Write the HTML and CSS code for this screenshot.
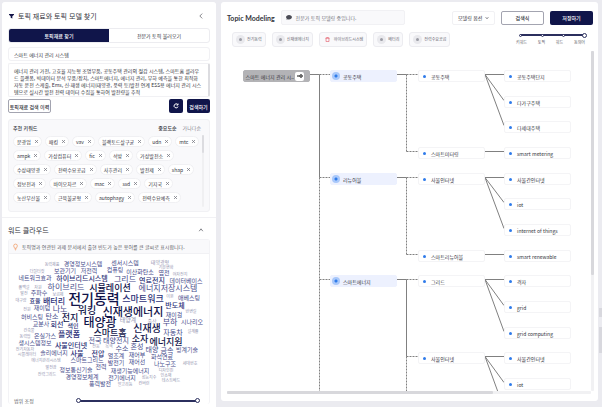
FILE: index.html
```html
<!DOCTYPE html>
<html lang="ko">
<head>
<meta charset="utf-8">
<meta name="viewport" content="width=device-width, initial-scale=1">
<title>Topic Modeling</title>
<link rel="stylesheet" href="styles.css">
</head>
<body>
<div class="app">
  <aside class="side">
    <section class="block finder">
      <header class="block-head">
        <svg class="funnel" viewBox="0 0 12 12"><path d="M0 1h12v2L8 6.500V12L4 10V6.500L0 3z"/></svg>
        <h2>토픽 재료와 토픽 모델 찾기</h2>
        <button class="icon-btn" aria-label="접기"><svg viewBox="0 0 10 10"><path d="M7 1L3 5l4 4"/></svg></button>
      </header>
      <div class="tabs">
        <button class="tab on">토픽재료 찾기</button>
        <button class="tab">전문가 토픽 불러오기</button>
      </div>
      <input class="field" type="text" aria-label="토픽명" value="스마트 에너지 관리 시스템">
      <div class="area">
        <textarea aria-label="토픽 설명" rows="4">에너지 관리 가전, 고효율 지능형 조명부품, 공동주택 관리의 절감 시스템, 스마트홈 클라우
드 플랫폼, 빅데이터 분석 부품/장치, 스마트에너지, 에너지 관리, 부하 예측을 통한 최적화
자동 운전 스케줄, Ems, 신·재생 에너지(태양광, 풍력 등)발전 연계 ESS용 에너지 관리 시스
템으로 실시간 발전 전력 데이터 수집을 통하여 발전량을 추적</textarea>
      </div>
      <div class="actions">
        <button class="btn outline history">토픽재료 검색 이력</button>
        <button class="btn dark refresh" aria-label="새로고침"><svg viewBox="0 0 12 12"><path d="M9.500 3.500A4 4 0 1 0 10 7M10 1v3H7"/></svg></button>
        <button class="btn dark search">검색하기</button>
      </div>
      <div class="keywords">
        <div class="kw-head">
          <h3>추천 키워드</h3>
          <button class="sort on">중요도순</button>
          <button class="sort">가나다순</button>
        </div>
        <div class="kw-body">
          <div class="chips" id="chips"></div>
          <div class="kw-scroll"><i></i></div>
        </div>
      </div>
    </section>
    <section class="block words">
      <header class="block-head">
        <h2>워드 클라우드</h2>
        <button class="icon-btn" aria-label="접기"><svg viewBox="0 0 10 10"><path d="M2 7l3-4 3 4"/></svg></button>
      </header>
      <div class="cloud-card">
        <p class="tip">
          <svg viewBox="0 0 12 16"><path d="M4 11C4 9 1.500 8 1.500 5.500a4.500 4.500 0 0 1 9 0C10.500 8 8 9 8 11zM4 13h4M5 15h2"/></svg>
          토픽명과 연관된 과제 문서에서 출현 빈도가 높은 용어를 큰 글씨로 표시합니다.
        </p>
        <div class="cloud" id="cloud"></div>
        <div class="range-row">
          <label for="scope-max">범위 조정</label>
          <div class="dual">
            <input type="range" id="scope-min" aria-label="최소 범위" min="0" max="100" value="0">
            <input type="range" id="scope-max" min="0" max="100" value="100">
          </div>
        </div>
      </div>
    </section>
  </aside>

  <main class="main">
    <header class="top">
      <h1>Topic Modeling</h1>
      <p class="status"><svg viewBox="0 0 14 12"><path d="M7 0c4 0 7 2.300 7 5.300s-3 5.200-7 5.200c-1 0-2-.1-3-.5L1 11.500 1.600 8.500C.6 7.600 0 6.500 0 5.300 0 2.300 3 0 7 0z"/></svg>전문가 토픽 모델링 중입니다.</p>
      <div class="pick">
        <select aria-label="모델링 옵션"><option>모델링 옵션</option></select>
        <svg viewBox="0 0 10 10"><path d="M2 3.500l3 3 3-3"/></svg>
      </div>
      <button class="btn outline wide">검색식</button>
      <button class="btn dark wide">저장하기</button>
    </header>
    <div class="sub">
      <div class="tags">
        <button class="tag"><i class="plus"></i>전기동력</button>
        <button class="tag"><i class="plus"></i>신재생에너지</button>
        <button class="tag"><svg class="trash" viewBox="0 0 12 12"><path d="M1 3h10M4 3V1h4v2M2.500 3v8h7V3"/></svg>하이브리드시스템</button>
        <button class="tag"><i class="plus"></i>배터리</button>
        <button class="tag"><i class="plus"></i>전력수요공급</button>
      </div>
      <div class="depth">
        <div class="depth-track">
          <i></i><i></i><i></i>
          <input type="range" aria-label="표시 단계" min="0" max="3" value="3">
        </div>
        <div class="depth-labels"><span>키워드</span><span>토픽</span><span>워드</span><span>동의어</span></div>
      </div>
    </div>
    <div class="stage">
      <div class="canvas" id="canvas"><svg class="wires" id="wires"></svg></div>
      <div class="vbar"><i></i></div>
      <div class="hbar"><i></i></div>
    </div>
  </main>
  <div class="rail"><i class="short"></i><i class="long"></i></div>
</div>
<script src="app.js"></script>
</body>
</html>
```
FILE: styles.css
```css
* { box-sizing: border-box; margin: 0; padding: 0; }
html, body { height: 100%; }
body {
  background: #ebebf0;
  color: #33343c;
  font: 400 5px/7px "Noto Sans CJK KR", "Noto Sans", sans-serif;
  overflow: hidden;
}
button, input, textarea, select {
  font: inherit;
  color: inherit;
  border: 0;
  background: none;
  outline: 0;
}
button { white-space: nowrap; }
svg { fill: none; stroke: currentColor; flex: none; }
h1, h2, h3 { font-weight: 500; }

.app {
  display: grid;
  grid-template-columns: 214px minmax(0, 1fr);
  gap: 5px;
  height: 100vh;
  padding: 2px 4px 0 2px;
}

/* Sidebar */
.side { display: flex; flex-direction: column; gap: 1px; min-height: 0; background: #f1f1f4; border-radius: 3px 3px 0 0; overflow: hidden; }
.block { background: #fff; padding: 0 6px; }
.finder { padding-bottom: 5px; }
.words { flex: 1; }
.block-head { display: flex; align-items: center; gap: 4px; height: 26px; padding-top: 2px; }
.block-head h2 { flex: 1; font-size: 7px; line-height: 10px; font-weight: 400; }
.words .block-head { height: 21px; }
.funnel { width: 5px; height: 6px; margin-left: 1px; fill: #14164a; stroke: none; }
.icon-btn { display: flex; padding: 0 6px 0 0; }
.icon-btn svg { width: 6px; height: 6px; stroke-width: 1; }

.tabs { display: flex; height: 15px; border: 1px solid #ececf0; border-radius: 3px; overflow: hidden; }
.tab { flex: 1; }
.tab.on { background: #10154a; color: #fff; font-weight: 500; }
.field { display: block; width: 100%; height: 14px; margin-top: 4px; padding: 0 5px; border: 1px solid #f1f1f4; border-radius: 3px; }
.area { display: flex; margin-top: 2px; border: 1px solid #f1f1f4; border-right: 2px solid #dcdce0; border-radius: 2px; }
.area textarea { flex: 1; min-width: 0; height: 32px; padding: 3px 0 0 5px; resize: none; overflow: hidden; white-space: pre; }

.btn { display: flex; align-items: center; justify-content: center; height: 14px; border-radius: 2px; font-weight: 500; }
.outline { border: 1px solid #a3a4b0; background: #fff; }
.dark { background: #10154a; color: #fff; }
.actions { display: flex; gap: 4px; margin-top: 2px; }
.history { width: 43px; margin-right: auto; }
.refresh { width: 14px; }
.refresh svg { width: 6px; height: 6px; stroke-width: 2; }
.search { width: 23px; }

.keywords { margin-top: 6px; padding: 4px 4px 5px; height: 93px; background: #f9f9fb; border: 1px solid #f1f1f4; border-radius: 3px; }
.kw-head { display: flex; gap: 6px; padding-right: 4px; }
.kw-head h3 { flex: 1; font-size: 5px; font-weight: 500; }
.sort { color: #85868f; line-height: 7px; }
.sort.on { color: #33343c; font-weight: 500; }
.kw-body { display: flex; margin-top: 4px; }
.chips { flex: 1; display: grid; align-content: start; gap: 3px; padding-top: 1px; }
.chip-row { display: flex; gap: 3px; }
.chip { display: flex; align-items: center; gap: 4px; height: 11px; padding: 0 3px; background: #fff; border: 1px solid #f0f0f3; border-radius: 6px; }
.chip svg { width: 3px; height: 3px; color: #777882; stroke-width: 1; }
.kw-scroll { width: 2px; height: 72px; background: #f0f0f2; border-radius: 1px; margin-right: 1px; }
.kw-scroll i { display: block; height: 18px; background: #dcdce0; border-radius: 1px; }

.cloud-card { border: 1px solid #f3f3f6; border-bottom: 0; border-radius: 3px; }
.tip { display: flex; align-items: center; gap: 4px; height: 14px; padding: 0 4px; background: #f9f9fb; border-bottom: 1px solid #f1f1f4; color: #5c5d66; white-space: nowrap; }
.tip svg { width: 5px; height: 8px; color: #f08b4c; stroke-width: 1.5; }
.cloud { position: relative; height: 143px; }
.cloud span { position: absolute; transform: translate(-50%, -50%); white-space: nowrap; line-height: 1; }
.t0 { color: #9495b0; }
.t1 { color: #484d8c; }
.t2 { color: #2d3278; font-weight: 500; }
.t3 { color: #11144a; font-weight: 500; }
.range-row { display: flex; align-items: center; justify-content: space-between; padding: 0 9px 0 5px; }
.range-row label { color: #5c5d66; }
.dual { display: grid; width: 124px; background: linear-gradient(#2b2f5e, #2b2f5e) center / 120px 2px no-repeat; }
.dual input { grid-area: 1 / 1; pointer-events: none; }
input[type="range"] { appearance: none; width: 100%; height: 6px; background: none; }
input[type="range"]::-webkit-slider-thumb { appearance: none; width: 5px; height: 5px; background: #fff; border: 1px solid #2b2f5e; border-radius: 50%; pointer-events: auto; }

/* Main panel */
.main { display: flex; flex-direction: column; min-width: 0; margin-bottom: 6px; padding: 8px 4px 7px 6px; background: #fff; border-radius: 3px; }
.top { display: flex; align-items: center; gap: 6px; padding-right: 1px; }
.top h1 { font: 700 7px/10px Lato, sans-serif; white-space: nowrap; }
.status { display: flex; align-items: center; gap: 4px; width: 124px; height: 15px; margin-right: auto; padding: 0 4px; background: #f9f9fb; border: 1px solid #f1f1f4; border-radius: 2px; color: #777882; }
.status svg { width: 6px; height: 5px; fill: #4a4b55; stroke: none; }
.pick { display: flex; align-items: center; width: 43px; height: 14px; padding: 0 5px; border: 1px solid #f1f1f4; border-radius: 2px; }
.pick select { flex: 1; min-width: 0; appearance: none; }
.pick svg { width: 4px; height: 4px; stroke-width: 2; }
.wide { width: 43px; }

.sub { display: flex; justify-content: space-between; margin-top: 7px; padding: 0 7px 0 5px; height: 19px; }
.tags { display: flex; gap: 6px; }
.tag { display: flex; align-items: center; gap: 2px; height: 15px; padding: 0 3px; background: #f9f9fb; border: 1px solid #ececf0; border-radius: 3px; color: #666771; font-size: 4px; }
.plus { display: grid; place-items: center; width: 9px; height: 9px; border-radius: 50%; background: #e9e9ed; }
.plus::before { content: ""; width: 3px; height: 3px; border-radius: 50%; background: #9c9da6; }
.trash { width: 5px; height: 5px; margin: 0 2px; color: #e25563; stroke-width: 1.5; }
.depth { width: 72px; }
.depth-track { display: grid; grid-template-columns: 22px 21px 25px; align-items: center; height: 6px; padding-left: 4px; background: linear-gradient(#2b2f5e, #2b2f5e) 5px center / 64px 2px no-repeat; }
.depth-track i { grid-area: 1 / 1; width: 3px; height: 3px; border: 1px solid #2b2f5e; background: #fff; border-radius: 50%; }
.depth-track i:nth-child(2) { grid-column: 2; }
.depth-track i:nth-child(3) { grid-column: 3; }
.depth-track input { grid-area: 1 / 1 / 2 / 4; }
.depth-labels { display: flex; justify-content: space-between; padding: 0 2px 0 1px; font-size: 4px; color: #5c5d66; margin-top: 1px; }

.stage { flex: 1; min-height: 0; display: grid; grid-template: minmax(0, 1fr) 3px / minmax(0, 1fr) 3px; }
.canvas { position: relative; overflow: hidden; }
.vbar, .hbar { background: #f1f1f3; border-radius: 1px; }
.vbar i, .hbar i { display: block; background: #d8d8dc; border-radius: 1px; }
.vbar i { height: 66%; }
.hbar i { width: 73%; height: 3px; }
.wires { position: absolute; width: 100%; height: 100%; stroke: #808080; stroke-width: 1; }
.wires .dots { stroke-dasharray: 2 1; }
.node { position: absolute; display: flex; align-items: center; gap: 5px; width: 67px; height: 12px; padding: 0 4px; background: #fff; border: 1px solid #f4f4f6; border-radius: 2px; white-space: nowrap; }
.node::before { content: ""; width: 3px; height: 3px; border-radius: 50%; background: #2f7bea; }
.node.topic { gap: 3px; padding: 0 1px; background: #edf1fe; border-color: #edf1fe; }
.node.topic::before { width: 8px; height: 8px; background: radial-gradient(circle, #2f7bea 0 1px, #a9c8fa 2px); }
.node.root { justify-content: flex-end; gap: 1px; padding: 0 5px; background: #b3b3b6; border-color: #b3b3b6; }
.node.root::before { display: none; }
.toggle { display: flex; flex: none; align-items: center; justify-content: center; width: 9px; height: 9px; background: #fff; border-radius: 2px; }
.toggle svg { width: 6px; height: 4px; stroke-width: 2; color: #111; }

.rail { position: absolute; right: 0; top: 308px; display: grid; gap: 10px; width: 3px; }
.rail i { background: #d8d8de; }
.short { height: 9px; }
.long { height: 26px; }
```
FILE: app.js
```js
const keywords = [
  ["문광업", "패킹", "vav", "블랙토드살구균", "udn", "mtc"],
  ["ampk", "가상컴퓨터", "fic", "석방", "가상발전소"],
  ["수상태양광", "전력수요공급", "사후관리", "발전제", "shap"],
  ["정보전과", "바이오차르", "mac", "ssd", "기지국"],
  ["농산부산물", "근육불균형", "autophagy", "전력수요예측"]
];
document.getElementById("chips").innerHTML = keywords.map(row => `<div class="chip-row">${row.map(k =>
  `<button class="chip">${k}<svg viewBox="0 0 4 4"><path d="M0 0l4 4M4 0L0 4"/></svg></button>`).join("")}</div>`).join("");

// text, centre x, centre y, size, tone
const cloudWords = [
  ["동력제품",52,264,4,0],["경영정보시스템",83,264,6,1],["센서시스템",125,263,6,1],["태양광형",160,261,5,0],["기운변화",166,267,4,0],
  ["더칠터컷",37,271,4,0],["보관기기",65,271,6,1],["저전력",89,271,6,1],["컴퓨팅",115,270,6,1],["이산화탄소",140,272,6,1],["엽전",164,273,6,1],["여자전지",180,274,4,0],
  ["네트워크효과",35,278,6,1],["하이브리드시스템",82,278,7,2],["그리드",125,279,8,1],["연료전지",152,280,7,2],["데이터베이스",186,281,6,1],
  ["폴백설",24,287,4,0],["자원",38,287,4,0],["하이브리드",66,287,8,1],["시뮬레이션",110,287,9,3],["에너지저장시스템",168,288,8,1],
  ["발전",24,293,4,0],["주파수",39,293,6,1],["보급제",58,294,4,0],["전기동력",94,298,14,3],["스마트워크",143,298,9,2],["이온",170,296,4,0],["애베스팅",189,298,6,1],
  ["대구량",21,300,4,0],["효율",35,301,6,2],["배터리",54,301,8,2],["반도체",175,305,7,2],
  ["전원",27,309,4,0],["재이텀",42,308,6,1],["나노",60,309,8,1],["워킹",87,310,10,3],["신재생에너지",133,311,11,3],["재이걸",174,315,6,1],["반변길",191,311,4,0],
  ["허비스팅",32,317,6,1],["탄소",52,316,7,1],["전지",70,317,9,3],["태양광",100,322,12,3],["태양계",128,320,6,0],["출산",152,320,5,0],["부하",170,322,8,1],["시나리오",192,322,6,1],
  ["교분사",41,324,6,1],["회선",57,324,7,2],["색인",73,326,6,2],["스마트홈",110,332,9,3],["신재생",147,328,10,3],["자동차",173,332,7,1],["설계률",193,331,4,0],
  ["건축물",29,330,4,0],["동력업",25,336,4,0],["온실가스",45,336,6,1],["플랫폼",69,334,8,2],["전국",95,340,7,1],["태양전지",116,340,7,1],["소자",140,338,9,3],["에너지원",166,341,9,3],
  ["생시스템정보",35,343,6,1],["사물인터넷",71,345,7,2],["전등",96,346,4,0],["녹색",109,346,4,0],["수소",122,348,7,1],["혼성",137,346,7,1],["태양",152,349,7,1],["금속",167,350,7,1],["빙계기술",187,350,6,1],
  ["전기자동차",25,349,4,0],["시뮬레이터",27,354,4,0],["솔리에너지",54,353,6,1],["사물",77,353,7,2],["전압",98,353,7,2],["열조계",116,356,6,1],["재어부",137,355,6,1],["화석연료",162,357,6,1],
  ["에너지관리시스템",46,360,4,0],["스마트그리드",87,360,6,1],["발전기",116,363,6,1],["재어선",137,362,6,1],["나노구조",165,364,6,1],["세대번호",190,363,4,0],
  ["발전광",51,367,4,0],["정보통신기술",76,370,6,1],["전력",101,367,6,1],["재생기능에너지",130,371,6,1],["디자인핀",166,370,4,0],
  ["전력그리드",47,374,4,0],["경영정보체계",82,377,6,1],["전기에너지",122,378,6,1],["성능지수",149,377,4,0],["인소재",166,375,4,0],["테스트베드",171,380,4,0],
  ["풍력발전",100,384,6,1],["알고리듬",125,384,4,0],["컨버런",144,383,4,0]
];
document.getElementById("cloud").innerHTML = cloudWords.map(([t, x, y, s, c]) =>
  `<span class="t${c}" style="left:${x - 9}px;top:${y - 254}px;font-size:${s}px">${t}</span>`).join("");

// Tree: column left edges, and a row pitch of 77px for every three rows
const columns = [16, 103, 191, 277];
const nodeWidth = 67;
const firstRow = 24;
const rowY = r => firstRow + Math.round(r * 77 / 3);
const tree = [
  { text: "공동주택", children: [
    { text: "공동주택", leaves: ["공동주택단지", "다가구주택", "다세대주택"] },
    { text: "스마트미터링", leaves: ["smart metering"] } ] },
  { text: "리뉴어블", children: [
    { text: "사물인터넷", leaves: ["사물간인터넷", "iot", "internet of things"] },
    { text: "스마트리뉴어블", leaves: ["smart renewable"] } ] },
  { text: "스마트에너지", children: [
    { text: "그리드", leaves: ["격자", "grid", "grid computing"] },
    // null: a leaf below the visible part, of which only the wire shows
    { text: "사물인터넷", leaves: ["사물간인터넷", "iot", null] } ] }
];
let nodes = "", wires = "", row = 0;
const node = (col, r, text, cls = "") => {
  nodes += `<div class="node ${cls}" style="left:${columns[col]}px;top:${rowY(r) - 5}px">${text}</div>`;
};
const wire = (x1, y1, x2, y2, cls = "") => {
  wires += `<path class="${cls}" d="M${x1} ${y1}L${x2} ${y2}"/>`;
};
const lineY = r => rowY(r) - 0.5;
const trunk = 92.5, branch = 179.5;
node(0, 0, `스마트 에너지 관리 시..<button class="toggle" aria-label="펼치기"><svg viewBox="0 0 12 8"><path d="M0 4h5"/><circle cx="8" cy="4" r="2.500"/></svg></button>`, "root");
wire(columns[0] + nodeWidth, lineY(0), trunk, lineY(0));
wire(trunk, lineY(0), trunk, lineY(4));
wire(trunk, lineY(4), trunk, 400, "dots");
tree.forEach(topic => {
  const start = row;
  node(1, start, topic.text, "topic");
  wire(trunk, lineY(start), columns[1], lineY(start), "dots");
  wire(columns[1] + nodeWidth, lineY(start), branch, lineY(start));
  topic.children.forEach(child => {
    node(2, row, child.text);
    wire(branch, lineY(row), columns[2], lineY(row), "dots");
    if (row > start) wire(branch, lineY(start), branch, lineY(row), start === 8 ? "" : "dots");
    const from = row;
    child.leaves.forEach(leaf => {
      if (leaf) node(3, row, leaf);
      wire(columns[2] + nodeWidth, lineY(from), columns[3], lineY(row));
      row++;
    });
  });
});
wire(branch, lineY(11), branch, 400, "dots");
document.getElementById("wires").innerHTML = wires;
document.getElementById("canvas").insertAdjacentHTML("beforeend", nodes);
```
